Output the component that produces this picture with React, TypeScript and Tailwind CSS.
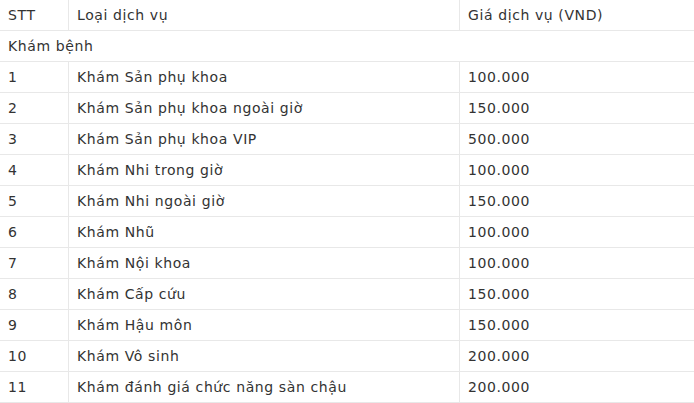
const rows: [string, string, string][] = [
  ['1', 'Khám Sản phụ khoa', '100.000'],
  ['2', 'Khám Sản phụ khoa ngoài giờ', '150.000'],
  ['3', 'Khám Sản phụ khoa VIP', '500.000'],
  ['4', 'Khám Nhi trong giờ', '100.000'],
  ['5', 'Khám Nhi ngoài giờ', '150.000'],
  ['6', 'Khám Nhũ', '100.000'],
  ['7', 'Khám Nội khoa', '100.000'],
  ['8', 'Khám Cấp cứu', '150.000'],
  ['9', 'Khám Hậu môn', '150.000'],
  ['10', 'Khám Vô sinh', '200.000'],
  ['11', 'Khám đánh giá chức năng sàn chậu', '200.000'],
];

export default function App() {
  const cell = 'h-[31px] pl-2 pt-[1px] border-b border-[#e8e8e8] text-left font-normal align-middle';
  return (
    <div className="w-[694px] bg-white text-[#333] text-[14px] tracking-[0.6px] font-['DejaVu_Sans','Verdana',sans-serif]">
      <table className="w-full border-separate border-spacing-0 table-fixed">
        <colgroup>
          <col className="w-[69px]" />
          <col className="w-[391px]" />
          <col />
        </colgroup>
        <thead>
          <tr>
            <th className={`${cell} border-r`}>STT</th>
            <th className={`${cell} border-r`}>Loại dịch vụ</th>
            <th className={cell}>Giá dịch vụ (VND)</th>
          </tr>
        </thead>
        <tbody>
          <tr>
            <td colSpan={3} className={cell}>Khám bệnh</td>
          </tr>
          {rows.map(([n, name, price]) => (
            <tr key={n}>
              <td className={`${cell} border-r`}>{n}</td>
              <td className={`${cell} border-r`}>{name}</td>
              <td className={cell}>{price}</td>
            </tr>
          ))}
        </tbody>
      </table>
    </div>
  );
}
